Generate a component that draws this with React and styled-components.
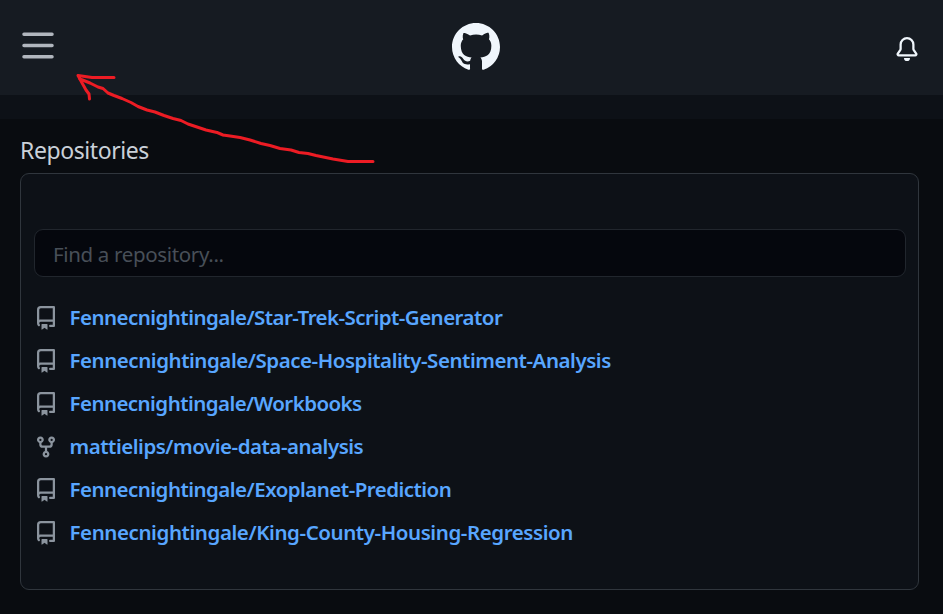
import React from "react";
import styled, { createGlobalStyle } from "styled-components";

const GlobalStyle = createGlobalStyle`
  * { box-sizing: border-box; }
  body {
    margin: 0;
    background: #090c10;
    color: #c9d1d9;
    font-family: "Segoe UI", "Noto Sans", sans-serif;
  }
`;

const Page = styled.div`
  position: relative;
  height: 614px;
  overflow: hidden;
`;

const Header = styled.header`
  display: grid;
  grid-template-columns: 1fr 48px 1fr;
  align-items: start;
  height: 95px;
  padding: 23px 24px 0 20px;
  background: #161b22;
`;

const IconButton = styled.button`
  display: flex;
  justify-self: ${(p) => p.$side};
  margin: ${(p) => p.$top}px 0 0;
  padding: 0;
  border: 0;
  background: none;
  color: ${(p) => p.$color};
`;

const Logo = styled.a`
  display: flex;
  color: #f0f6fc;
  margin-left: 6px;
`;

const Strip = styled.div`
  height: 24px;
  background: #0d1117;
`;

const Main = styled.main`
  padding: 14px 24px 0 20px;
`;

const Title = styled.h2`
  margin: 0;
  height: 40px;
  font-size: 23px;
  line-height: 35px;
  font-weight: 400;
  letter-spacing: ${(p) => p.$spacing}px;
`;

const Panel = styled.section`
  height: 417px;
  padding: 55px 12px 0 13px;
  border: 1px solid #30363d;
  border-radius: 9px;
  background: #0d1117;
`;

const Search = styled.input`
  display: block;
  width: 100%;
  height: 48px;
  padding: 2px 18px 0;
  border: 1px solid #21262d;
  border-radius: 9px;
  background: #05070d;
  color: #c9d1d9;
  font: 400 20.5px "Segoe UI", "Noto Sans", sans-serif;
  letter-spacing: -0.34px;
  &::placeholder { color: #484f58; opacity: 1; }
`;

const RepoList = styled.ul`
  margin: 19px 0 0;
  padding: 0;
  list-style: none;
`;

const RepoRow = styled.li`
  display: flex;
  align-items: center;
  gap: 11.5px;
  height: 43px;
  color: #8b949e;
`;

const RepoLink = styled.a`
  color: #58a6ff;
  font-size: 20.5px;
  line-height: 30px;
  padding-bottom: 2px;
  font-weight: 600;
  white-space: nowrap;
  letter-spacing: ${(p) => p.$spacing}px;
`;

const Icon = styled.svg`
  display: block;
  flex: none;
  width: ${(p) => p.$size}px;
  height: ${(p) => p.$size}px;
  fill: currentColor;
`;

const Annotation = styled.svg`
  position: absolute;
  top: 0;
  left: 0;
  pointer-events: none;
`;

const paths = {
  bars: "M1 2.75A.75.75 0 011.75 2h12.5a.75.75 0 110 1.5H1.75A.75.75 0 011 2.75zm0 5A.75.75 0 011.75 7h12.5a.75.75 0 110 1.5H1.75A.75.75 0 011 7.75zM1.75 12a.75.75 0 100 1.5h12.5a.75.75 0 100-1.5H1.75z",
  logo: "M8 0C3.58 0 0 3.58 0 8c0 3.54 2.29 6.53 5.47 7.59.4.07.55-.17.55-.38 0-.19-.01-.82-.01-1.49-2.01.37-2.53-.49-2.69-.94-.09-.23-.48-.94-.82-1.13-.28-.15-.68-.52-.01-.53.63-.01 1.08.58 1.23.82.72 1.21 1.87.87 2.33.66.07-.52.28-.87.51-1.07-1.78-.2-3.64-.89-3.64-3.95 0-.87.31-1.59.82-2.15-.08-.2-.36-1.02.08-2.12 0 0 .67-.21 2.2.82.64-.18 1.32-.27 2-.27.68 0 1.36.09 2 .27 1.53-1.04 2.2-.82 2.2-.82.44 1.1.16 1.92.08 2.12.51.56.82 1.27.82 2.15 0 3.07-1.87 3.75-3.65 3.95.29.25.54.73.54 1.48 0 1.07-.01 1.93-.01 2.2 0 .21.15.46.55.38A8.013 8.013 0 0016 8c0-4.42-3.58-8-8-8z",
  bell: "M8 16a2 2 0 001.985-1.75c.017-.137-.097-.25-.235-.25h-3.5c-.138 0-.252.113-.235.25A2 2 0 008 16zM8 1.5A3.5 3.5 0 004.5 5v2.947c0 .346-.102.683-.294.97l-1.703 2.556a.018.018 0 00-.003.01l.001.006c0 .002.002.004.004.006a.017.017 0 00.006.004l.007.001h10.964l.007-.001a.016.016 0 00.006-.004.016.016 0 00.004-.006l.001-.007a.017.017 0 00-.003-.01l-1.703-2.554a1.75 1.75 0 01-.294-.97V5A3.5 3.5 0 008 1.5zM3 5a5 5 0 0110 0v2.947c0 .05.015.098.042.139l1.703 2.555A1.518 1.518 0 0113.482 13H2.518a1.518 1.518 0 01-1.263-2.36l1.703-2.554A.25.25 0 003 7.947V5z",
  repo: "M2 2.5A2.5 2.5 0 014.5 0h8.75a.75.75 0 01.75.75v12.5a.75.75 0 01-.75.75h-2.5a.75.75 0 110-1.5h1.75v-2h-8a1 1 0 00-.714 1.7.75.75 0 01-1.072 1.05A2.495 2.495 0 012 11.5v-9zm10.5-1V9h-8c-.356 0-.694.074-1 .208V2.5a1 1 0 011-1h8zM5 12.25v3.25a.25.25 0 00.4.2l1.45-1.087a.25.25 0 01.3 0L8.6 15.7a.25.25 0 00.4-.2v-3.25a.25.25 0 00-.25-.25h-3.5a.25.25 0 00-.25.25z",
  fork: "M5 3.25a.75.75 0 11-1.5 0 .75.75 0 011.5 0zm0 2.122a2.25 2.25 0 10-1.5 0v.878A2.25 2.25 0 005.75 8.5h1.5v2.128a2.251 2.251 0 101.5 0V8.5h1.5a2.25 2.25 0 002.25-2.25v-.878a2.25 2.25 0 10-1.5 0v.878a.75.75 0 01-.75.75h-4.5A.75.75 0 015 6.25v-.878zm3.75 7.378a.75.75 0 11-1.5 0 .75.75 0 011.5 0zm3-8.75a.75.75 0 100-1.5.75.75 0 000 1.5z",
};

const Glyph = ({ name, size = 24 }) => (
  <Icon $size={size} viewBox="0 0 16 16" aria-hidden="true">
    <path fillRule="evenodd" d={paths[name]} />
  </Icon>
);

const repos = [
  { icon: "repo", name: "Fennecnightingale/Star-Trek-Script-Generator", spacing: -0.54 },
  { icon: "repo", name: "Fennecnightingale/Space-Hospitality-Sentiment-Analysis", spacing: -0.46 },
  { icon: "repo", name: "Fennecnightingale/Workbooks", spacing: -0.56 },
  { icon: "fork", name: "mattielips/movie-data-analysis", spacing: -0.48 },
  { icon: "repo", name: "Fennecnightingale/Exoplanet-Prediction", spacing: -0.53 },
  { icon: "repo", name: "Fennecnightingale/King-County-Housing-Regression", spacing: -0.42 },
];

export default function App() {
  return (
    <Page>
      <GlobalStyle />
      <Header>
        <IconButton $side="start" $top={5} $color="#b1b6be" aria-label="Menu">
          <Glyph name="bars" size={36} />
        </IconButton>
        <Logo aria-label="GitHub">
          <Glyph name="logo" size={48} />
        </Logo>
        <IconButton $side="end" $top={14} $color="#f0f6fc" aria-label="Notifications">
          <Glyph name="bell" />
        </IconButton>
      </Header>
      <Strip />
      <Main>
        <Title $spacing={-0.42}>Repositories</Title>
        <Panel>
          <Search placeholder="Find a repository..." />
          <RepoList>
            {repos.map((r) => (
              <RepoRow key={r.name}>
                <Glyph name={r.icon} />
                <RepoLink $spacing={r.spacing}>{r.name}</RepoLink>
              </RepoRow>
            ))}
          </RepoList>
        </Panel>
      </Main>
      <Annotation width="943" height="614" viewBox="0 0 943 614" aria-hidden="true">
        <g fill="none" stroke="#ed1c24" strokeWidth="3" strokeLinecap="round" strokeLinejoin="round">
          <path d="M373 161.5H348L342 160.5L333 159L316 155.5L308 153.5L299 152.5L291 150L280 148.5L270 145.5L261 143.5L250 140L240 137.5L230 136L223 135L217 132.5L206 130L197 127L188 124L181 120.5L173 118.5L164 115.5L155 112L147 110L138 106.5L131 102.5L122 98.5L114 95.5L108 93L103 88.5L98 87L90 83L80 79" />
          <path d="M114 77.5H92L78 75.5L81 81L86 90L89 94L89.5 99" />
        </g>
      </Annotation>
    </Page>
  );
}
